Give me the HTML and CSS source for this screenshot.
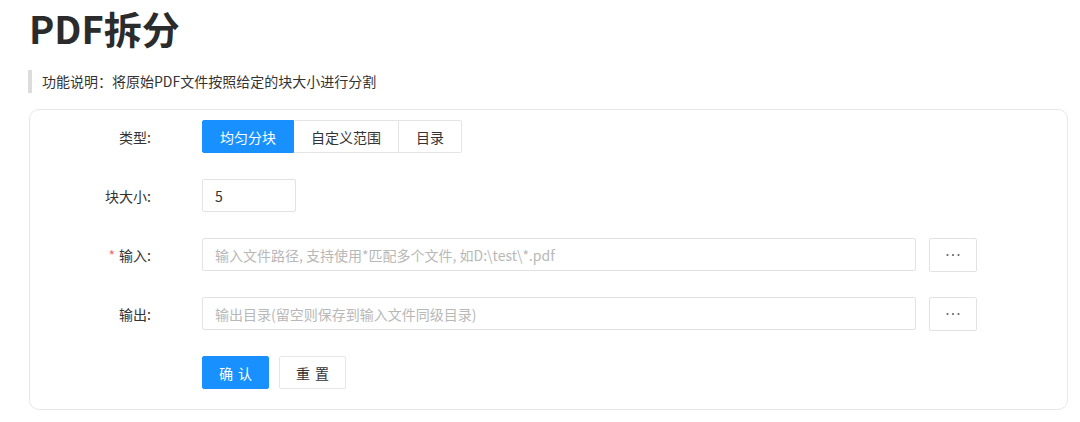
FILE: index.html
```html
<!DOCTYPE html>
<html lang="zh-CN">
<head>
<meta charset="utf-8">
<title>PDF拆分</title>
<link rel="stylesheet" href="styles.css">
</head>
<body>
<div class="page">
  <h1 class="title">PDF拆分</h1>
  <div class="desc">功能说明：将原始PDF文件按照给定的块大小进行分割</div>
  <div class="card">
    <div class="row">
      <div class="label">类型:</div>
      <div class="field">
        <div class="seg">
          <span class="seg-btn active">均匀分块</span>
          <span class="seg-btn">自定义范围</span>
          <span class="seg-btn">目录</span>
        </div>
      </div>
    </div>
    <div class="row">
      <div class="label">块大小:</div>
      <div class="field">
        <div class="input small">5</div>
      </div>
    </div>
    <div class="row">
      <div class="label"><span class="req">*</span>输入:</div>
      <div class="field">
        <div class="input wide placeholder">输入文件路径, 支持使用*匹配多个文件, 如D:\test\*.pdf</div>
        <span class="more"><svg class="dots" width="14" height="4" viewBox="0 0 14 4"><circle cx="1.5" cy="2" r="1.1"/><circle cx="7" cy="2" r="1.1"/><circle cx="12.5" cy="2" r="1.1"/></svg></span>
      </div>
    </div>
    <div class="row">
      <div class="label">输出:</div>
      <div class="field">
        <div class="input wide placeholder">输出目录(留空则保存到输入文件同级目录)</div>
        <span class="more"><svg class="dots" width="14" height="4" viewBox="0 0 14 4"><circle cx="1.5" cy="2" r="1.1"/><circle cx="7" cy="2" r="1.1"/><circle cx="12.5" cy="2" r="1.1"/></svg></span>
      </div>
    </div>
    <div class="row">
      <div class="label"></div>
      <div class="field">
        <span class="btn primary"><span class="spaced">确认</span></span>
        <span class="btn"><span class="spaced">重置</span></span>
      </div>
    </div>
  </div>
</div>
</body>
</html>
```

FILE: styles.css
```css
html, body {
  margin: 0;
  padding: 0;
  background: #fff;
}
body {
  font-family: "Noto Sans CJK SC", "Noto Sans", sans-serif;
  color: #333;
}
.page {
  padding: 0 12px 0 29px;
}
.title {
  margin: 0;
  font-size: 38px;
  line-height: 56px;
  font-weight: 700;
  color: #2b2b2b;
}
.desc {
  margin: 14px 0 0 -1px;
  border-left: 4px solid #dcdcdc;
  padding-left: 10px;
  font-size: 14px;
  line-height: 23px;
  height: 23px;
  color: #333;
}
.card {
  margin-top: 16px;
  border: 1px solid #e8e8ec;
  border-radius: 10px;
  padding: 10px 0 20px;
  display: flex;
  flex-direction: column;
  gap: 26px;
  width: 1037px;
}
.row {
  display: flex;
  align-items: center;
  height: 33px;
}
.label {
  width: 121px;
  padding-right: 51px;
  text-align: right;
  font-size: 14px;
  color: #333;
}
.req {
  color: #f56c6c;
  margin-right: 4px;
}
.field {
  display: flex;
  align-items: center;
  gap: 13px;
}
.seg {
  display: flex;
  height: 33px;
}
.seg-btn {
  display: flex;
  align-items: center;
  padding: 0 17px;
  border: 1px solid #e4e4e4;
  border-left: none;
  font-size: 14px;
  color: #333;
  background: #fff;
}
.seg-btn:first-child {
  border-left: 1px solid #1890ff;
  border-radius: 2px 0 0 2px;
}
.seg-btn:last-child {
  border-radius: 0 2px 2px 0;
}
.seg-btn.active {
  background: #1890ff;
  border-color: #1890ff;
  color: #fff;
}
.input {
  box-sizing: border-box;
  height: 33px;
  border: 1px solid #e2e2e2;
  border-radius: 2px;
  padding: 0 12px;
  display: flex;
  align-items: center;
  font-size: 14px;
  color: #333;
  background: #fff;
}
.input.small {
  width: 94px;
}
.input.wide {
  width: 714px;
}
.placeholder {
  color: #b8b8b8;
}
.more {
  box-sizing: border-box;
  width: 48px;
  height: 34px;
  border: 1px solid #e2e2e2;
  border-radius: 2px;
  display: flex;
  align-items: center;
  justify-content: center;
}
.dots {
  fill: #666;
}
.btn {
  box-sizing: border-box;
  height: 33px;
  padding: 0 16px;
  display: flex;
  align-items: center;
  border: 1px solid #e6e6e6;
  border-radius: 2px;
  font-size: 14px;
  color: #333;
  background: #fff;
}
.spaced {
  letter-spacing: 5px;
  margin-right: -5px;
}
.btn + .btn {
  margin-left: -3px;
}
.btn.primary {
  background: #1890ff;
  border-color: #1890ff;
  color: #fff;
}
```
